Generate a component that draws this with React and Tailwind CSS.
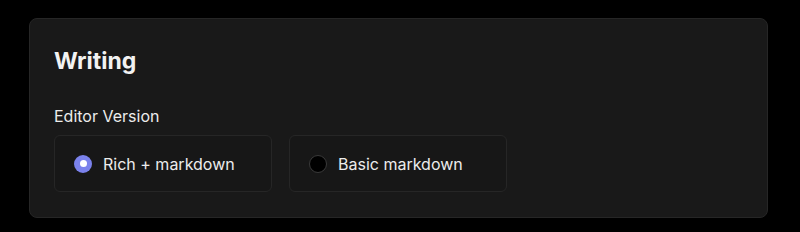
import { useState } from 'react'

const options = [
  { id: 'rich', label: 'Rich + markdown' },
  { id: 'basic', label: 'Basic markdown' },
]

function RadioCard({ label, checked, onSelect }) {
  return (
    <button
      type="button"
      onClick={onSelect}
      className="flex h-[57px] w-[218px] items-center gap-[11px] rounded-md border border-[#262626] bg-[#171717] px-[19px] text-left"
    >
      {checked ? (
        <span className="flex h-[18px] w-[18px] items-center justify-center rounded-full bg-[#7b82ec]">
          <span className="h-[7px] w-[7px] rounded-full bg-white" />
        </span>
      ) : (
        <span className="h-[18px] w-[18px] rounded-full border border-[#3a3a3a] bg-black" />
      )}
      <span className="text-base text-[#ececec]">{label}</span>
    </button>
  )
}

export default function App() {
  const [value, setValue] = useState('rich')

  return (
    <div className="h-[232px] w-[800px] bg-black pl-[29px] pt-[18px] font-['Inter',sans-serif]">
      <section className="h-[200px] w-[739px] rounded-lg border border-[#262626] bg-[#191919] px-[24px] pt-[28px]">
        <h2 className="text-[23px] font-bold leading-7 text-[#f2f2f2]">Writing</h2>
        <div className="mt-[29px] text-base leading-6 text-[#ececec]">Editor Version</div>
        <div className="mt-[7px] flex gap-[17px]">
          {options.map((o) => (
            <RadioCard
              key={o.id}
              label={o.label}
              checked={value === o.id}
              onSelect={() => setValue(o.id)}
            />
          ))}
        </div>
      </section>
    </div>
  )
}
